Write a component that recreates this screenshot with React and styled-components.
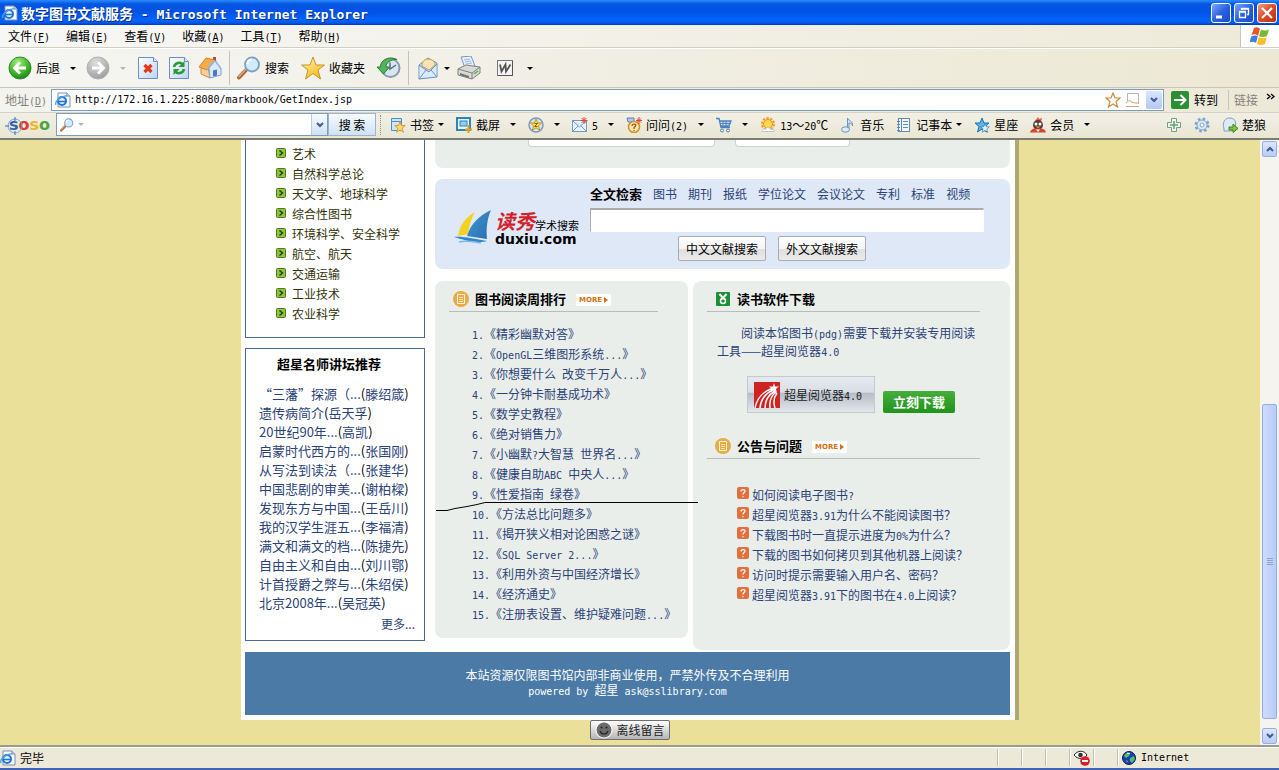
import React from "react";
import styled, { createGlobalStyle } from "styled-components";

const cjk = `"Noto Sans CJK SC", sans-serif`;

const GlobalStyle = createGlobalStyle`
  *, *::before, *::after {
    box-sizing: border-box;
  }
  body {
    margin: 0;
    font-family: ${cjk};
    font-size: 12px;
    line-height: 20px;
    color: #000;
    text-spacing-trim: space-all;
  }
  button, input {
    font: inherit;
    color: inherit;
  }
  button {
    padding: 0;
    border: 0;
    background: none;
    white-space: nowrap;
  }
  svg {
    display: block;
    flex: none;
  }
  ul, ol {
    margin: 0;
    padding: 0;
    list-style: none;
  }
`;

const Ascii = styled.span`
  font-family: "DejaVu Sans Mono", monospace;
  font-size: 10px;
  line-height: 1;
  white-space: pre-wrap;
`;

// latin runs are set in a half-width face, everything else stays full width
function Mixed({ children }) {
  return children
    .split(/([\x20-\x7e]+)/)
    .map((part, i) => (i % 2 ? <Ascii key={i}>{part}</Ascii> : part));
}

/* ---------- icons ---------- */

const IePage = ({ size = 16 }) => (
  <svg width={size} height={size} viewBox="0 0 16 16">
    <path d="M3 1h9l3 3v11H3z" fill="#f6faff" stroke="#7d8fae" />
    <path d="M12 1v3h3" fill="#cfdcf0" stroke="#7d8fae" />
    <circle cx="7" cy="9" r="4" fill="#eaf5ff" stroke="#1f76cf" strokeWidth="2" />
    <path d="M3.500 9.500h7" stroke="#1f76cf" strokeWidth="1.600" />
    <path d="M1 13C-1 9 8 3 12 4" fill="none" stroke="#4ba0e8" strokeWidth="1.300" />
  </svg>
);

const Back = () => (
  <svg width="24" height="24" viewBox="0 0 24 24">
    <defs>
      <radialGradient id="backFill" cx=".4" cy=".25" r=".8">
        <stop offset="0" stopColor="#a6ec7f" />
        <stop offset=".6" stopColor="#3fb52c" />
        <stop offset="1" stopColor="#1c7d15" />
      </radialGradient>
    </defs>
    <circle cx="12" cy="12" r="11" fill="url(#backFill)" stroke="#2c8a24" />
    <path d="M18 12H7M12 6.500L6.500 12l5.500 5.500" fill="none" stroke="#fff" strokeWidth="2.800" />
  </svg>
);

const Forward = () => (
  <svg width="24" height="24" viewBox="0 0 24 24">
    <defs>
      <radialGradient id="fwdFill" cx=".4" cy=".25" r=".8">
        <stop offset="0" stopColor="#dedede" />
        <stop offset="1" stopColor="#9b9b9b" />
      </radialGradient>
    </defs>
    <circle cx="12" cy="12" r="11" fill="url(#fwdFill)" stroke="#b2b2b2" />
    <path d="M6 12h11M12 6.500l5.500 5.500-5.500 5.500" fill="none" stroke="#fff" strokeWidth="2.800" />
  </svg>
);

const Sheet = ({ children }) => (
  <svg width="24" height="24" viewBox="0 0 24 24">
    <defs>
      <linearGradient id="sheetFill" x2="1" y2="1">
        <stop offset="0" stopColor="#fff" />
        <stop offset="1" stopColor="#bcd3f5" />
      </linearGradient>
    </defs>
    <path d="M2.500 1.500h15l4 4v17h-19z" fill="url(#sheetFill)" stroke="#6f8fc4" />
    <path d="M17.500 1.500v4h4" fill="#dfe9fa" stroke="#6f8fc4" />
    {children}
  </svg>
);

const Home = () => (
  <svg width="24" height="24" viewBox="0 0 24 24">
    <path d="M3 11l6-6 3 17-9-4z" fill="#f7cf9c" stroke="#c98b4a" />
    <path d="M11 12l6-7 6 7v7l-11 3z" fill="#dbe9fc" stroke="#7ea0d4" />
    <path d="M1 11L8 2l9 2-8 10z" fill="#f9ab4b" stroke="#d98226" />
    <path d="M9 13l8-9 6 9" fill="none" stroke="#9db7dd" strokeWidth="1.500" />
    <path d="M15 14.500l4-1v6l-4 1z" fill="#4d79b8" />
    <path d="M15 1h3v4l-3-2z" fill="#b94b28" />
  </svg>
);

const Magnifier = ({ size = 24 }) => (
  <svg width={size} height={size} viewBox="0 0 24 24">
    <path d="M9.500 13.500L2 21.500" stroke="#a9683a" strokeWidth="4" strokeLinecap="round" />
    <path d="M9 13l-7 7.500" stroke="#e4a877" strokeWidth="1.500" strokeLinecap="round" />
    <circle cx="15" cy="8.500" r="7" fill="#d3ecfd" stroke="#7c9fc9" strokeWidth="1.800" />
    <path d="M10.500 8c0-3 2-4.500 4.500-4.500" fill="none" stroke="#fff" strokeWidth="1.800" />
  </svg>
);

const StarTool = () => (
  <svg width="24" height="24" viewBox="0 0 24 24">
    <defs>
      <linearGradient id="starFill" x2=".6" y2="1">
        <stop offset="0" stopColor="#fffbb5" />
        <stop offset="1" stopColor="#f7b91d" />
      </linearGradient>
    </defs>
    <path
      d="M12 1l3 8h8.500L17 14l2.500 9L12 17.500 4.500 23 7 14 .5 9H9z"
      fill="url(#starFill)"
      stroke="#c8922c"
      strokeLinejoin="round"
    />
  </svg>
);

const History = () => (
  <svg width="24" height="24" viewBox="0 0 24 24">
    <circle cx="13.500" cy="12" r="9" fill="#d8e6f2" stroke="#8c9aa8" strokeWidth="2" />
    <path d="M13 6.500V13l6-4" fill="none" stroke="#5c6e80" strokeWidth="1.500" />
    <path d="M20 3.500C11-1 3 5 3.500 11H0l6.500 7 6-7H9C8.500 7 14 3 20 3.500z" fill="#54b45b" stroke="#2b7d35" />
  </svg>
);

const Mail = () => (
  <svg width="24" height="24" viewBox="0 0 24 24">
    <path d="M3 9l9-7 9 5v14L3 23z" fill="#bfdcf8" stroke="#6b94c8" />
    <path d="M6 10c0-5 3-7 6-7s7 2 7 6l-6 5z" fill="#fbe3b6" stroke="#d59c4b" />
    <path d="M3.500 10.500l9.500 6 7.500-7V20L3.500 22z" fill="#e4f2ff" opacity=".7" />
    <path d="M3 9l10 7 8-8M3 23l7-9M21 21l-6-7" fill="none" stroke="#6b94c8" />
  </svg>
);

const Printer = () => (
  <svg width="24" height="24" viewBox="0 0 24 24">
    <path d="M4 1l10-1 4 10-10 2z" fill="#e6f1ff" stroke="#7596c9" />
    <path d="M7 4l6-1M8 6l6-1M9 8l6-1" stroke="#9db9df" />
    <path d="M1 13l8-4 14 2v6l-8 6-14-4z" fill="#d9d9d6" stroke="#80807c" />
    <path d="M1 13l14 4 8-6M15 17v6" fill="none" stroke="#80807c" />
    <path d="M3 17l9 3v2l-9-3z" fill="#6d6d6a" />
    <path d="M17 18l4-3" stroke="#55b14b" strokeWidth="1.500" />
  </svg>
);

const WordIcon = () => (
  <svg width="24" height="24" viewBox="0 0 24 24">
    <rect x="4.500" y="4.500" width="15" height="15" fill="#f4f4f4" stroke="#777" />
    <path d="M5 19.500h14.500V5" fill="none" stroke="#555" />
    <path d="M7 8.500l1.500 7 4-7 .5 7 4.500-7" fill="none" stroke="#555" strokeWidth="1.800" />
  </svg>
);

const Flag = () => (
  <svg width="20" height="18" viewBox="0 0 20 18">
    <path d="M4 1c2-1 4-1 6 1L8 9C6 7 4 7 1.500 8z" fill="#e9562c" />
    <path d="M11 2.500c2 1 5 1.500 8 0L17 9c-3 1.500-6 1-8 .3z" fill="#78b833" />
    <path d="M1.300 9.500c3-1.500 5-1 6.500 0L6 16c-2-1.500-4-1.500-6.500-.5z" fill="#3d7fd9" />
    <path d="M8.700 10.300c2 1 5 1.500 8 0L15 17c-3 1.500-6 1-8-.3z" fill="#f7bf2a" />
  </svg>
);

const svg16 = { width: 16, height: 16, viewBox: "0 0 16 16" };
const starPath = "M8 1l2 5h5l-4 3.500 1.500 5.500L8 12l-4.500 3L5 9.500 1 6h5z";

const Bookmark = () => (
  <svg {...svg16}>
    <path d="M1.500 1.500h10v12h-10zM1 4.500h10" fill="#cfe6f8" stroke="#4d8fc4" />
    <path transform="translate(4 4) scale(.75)" d={starPath} fill="#ffd766" stroke="#cf8a1c" />
  </svg>
);
const Capture = () => (
  <svg {...svg16}>
    <rect x="1" y="1" width="13" height="12" fill="#e6f6fd" stroke="#2f84b5" strokeWidth="2" />
    <rect x="4" y="4" width="7" height="5" fill="#8fd1ee" stroke="#2f84b5" />
    <path d="M12.500 8v8M9 12.500h7" stroke="#e0a02b" strokeWidth="2" />
  </svg>
);
const CircleStar = () => (
  <svg {...svg16}>
    <circle cx="8" cy="8" r="7" fill="#d9e6f3" stroke="#7f9cbd" strokeWidth="1.500" />
    <path transform="translate(1.500 1) scale(.82)" d={starPath} fill="#ffdf52" stroke="#b98611" />
    <path d="M6.500 6.500h3l-3 3h3" fill="none" stroke="#8a6209" />
  </svg>
);
const NewMail = () => (
  <svg {...svg16}>
    <rect x=".5" y="3.500" width="14" height="11" fill="#e9f3fd" stroke="#6f9bc8" />
    <path d="M1 4l6.500 6L14 4M1 14l5-5M14 14L9 9" fill="none" stroke="#6f9bc8" />
    <path d="M12 0v7M8.500 3.500h7M9.500 1l5 5M14.500 1l-5 5" stroke="#d64a36" />
  </svg>
);
const Ask = () => (
  <svg {...svg16}>
    <path d="M1 1h7v4H2z" fill="#a9cbea" stroke="#5a86b4" />
    <circle cx="8" cy="10" r="5.500" fill="#ffe9b5" stroke="#d78f27" strokeWidth="1.500" />
    <path d="M6 9c0-3 5-2 3.500 0L8 10.500V12M8 13v1" fill="none" stroke="#9b5a12" strokeWidth="1.300" />
    <path d="M13 0v7M10 3.500h6M11 1.500l4 4M15 1.500l-4 4" stroke="#d64a36" />
  </svg>
);
const Cart = () => (
  <svg {...svg16}>
    <path d="M0 1.500h3l2 9h9M4 4h11l-2 5H5" fill="#b8d9f6" stroke="#4c83bd" strokeWidth="1.300" />
    <path d="M4.500 6.500h10M7 4v5M10 4v5" stroke="#4c83bd" />
    <circle cx="6" cy="13.500" r="1.500" fill="#fff" stroke="#4c83bd" />
    <circle cx="12" cy="13.500" r="1.500" fill="#fff" stroke="#4c83bd" />
  </svg>
);
const Sun = () => (
  <svg {...svg16}>
    <circle cx="8" cy="7" r="6" fill="none" stroke="#f0a321" strokeWidth="2" strokeDasharray="2.500 1.200" />
    <circle cx="8" cy="7" r="4.500" fill="#ffd84d" stroke="#ea8f1c" />
    <path d="M2 14.500c0-3 3-3 3.500-2 1-3 5-2 5 0 2-1 4 0 3.500 2z" fill="#fff" stroke="#b9c6d4" />
  </svg>
);
const Music = () => (
  <svg {...svg16}>
    <path d="M7.500 12V1c1 3 6 3 5 8 0-2-2-3-3.500-3v7" fill="#cfe4f8" stroke="#6d93bf" />
    <ellipse cx="5.500" cy="12.500" rx="4" ry="2.700" fill="#d8eafb" stroke="#6d93bf" />
  </svg>
);
const Notebook = () => (
  <svg {...svg16}>
    <rect x="2.500" y="1.500" width="11" height="13" fill="#eef6fe" stroke="#6287b8" />
    <path d="M5.500 1v14M7 4.500h5M7 7.500h5M7 10.500h5" stroke="#6287b8" />
    <path d="M1 4.500h3M1 7.500h3M1 10.500h3M1 13.500h3" stroke="#6287b8" />
  </svg>
);
const BlueStar = () => (
  <svg {...svg16}>
    <path d={starPath} fill="#57b5ef" stroke="#1f70b5" />
    <path transform="translate(6 6) scale(.62)" d={starPath} fill="#e5f6ff" stroke="#1f70b5" />
  </svg>
);
const Penguin = () => (
  <svg {...svg16}>
    <path d="M5 4l3-4 1 2 3-1-1 4z" fill="#e8593b" />
    <ellipse cx="8" cy="8" rx="5" ry="5" fill="#5a3a3a" />
    <circle cx="6" cy="7" r="1.500" fill="#fff" />
    <circle cx="10" cy="7" r="1.500" fill="#fff" />
    <path d="M5.500 9.500h5L8 11z" fill="#f5b32c" />
    <path d="M0 15.500c1-4 4-4 8-4s7 0 8 4z" fill="#d8452f" />
    <path d="M6 12.500h4L8 15z" fill="#fff" />
  </svg>
);
const Plus = () => (
  <svg {...svg16}>
    <path d="M5.500 1.500h5v4h4v5h-4v4h-5v-4h-4v-5h4z" fill="#eef5ee" stroke="#7b9a8a" />
    <path d="M8 4v8M4 8h8" stroke="#5da36b" strokeWidth="1.500" />
  </svg>
);
const Gear = () => (
  <svg {...svg16}>
    <circle cx="8" cy="8" r="6" fill="none" stroke="#7fa3cb" strokeWidth="3" strokeDasharray="2.400 2.312" />
    <circle cx="8" cy="8" r="5" fill="#deebf8" stroke="#7fa3cb" />
    <circle cx="8" cy="8" r="2" fill="#f6faff" stroke="#7fa3cb" />
  </svg>
);
const User = () => (
  <svg {...svg16}>
    <path d="M2 12C0 5 3 1 7.500 1S15 4 13 10l-3 4H2z" fill="#dce9f6" stroke="#7f9fc4" />
    <path d="M7 10h4V7l5 4.500-5 4V13H7z" fill="#7fc343" stroke="#3f8420" />
  </svg>
);

const Bullet = () => (
  <svg width="10" height="10" viewBox="0 0 10 10">
    <rect x=".5" y=".5" width="9" height="9" rx="1" fill="#8fc33f" stroke="#4d7c1b" />
    <path d="M3.500 2.500L6.500 5l-3 2.500" fill="none" stroke="#1f3d08" strokeWidth="1.400" />
  </svg>
);
const Question = () => (
  <svg width="12" height="12" viewBox="0 0 12 12">
    <rect width="12" height="12" rx="2" fill="#e2703c" />
    <path d="M4 4.500C4 1.800 8.300 2 8 4.500 7.800 5.800 6 5.500 6 7.500M6 9v1.200" fill="none" stroke="#fff" strokeWidth="1.200" />
  </svg>
);
const NoteDisc = () => (
  <svg {...svg16}>
    <circle cx="8" cy="8" r="8" fill="#e8ab45" />
    <path d="M4.500 3.500h7v9h-7z" fill="none" stroke="#fff6dd" />
    <path d="M6 6.500h4M6 8.500h4M6 10.500h4" stroke="#fff6dd" strokeWidth=".8" />
  </svg>
);
const GreenMark = () => (
  <svg {...svg16}>
    <rect x="1" y="1" width="14" height="14" rx="1" fill="#1c8f3a" />
    <path d="M4.500 3l3.500 4 3.500-4" fill="none" stroke="#fff" strokeWidth="2" />
    <circle cx="8" cy="10" r="2.500" fill="none" stroke="#fff" strokeWidth="1.500" />
  </svg>
);
const Sails = () => (
  <svg width="40" height="36" viewBox="0 0 40 36">
    <defs>
      <linearGradient id="sailBlue" x2="1" y2="1">
        <stop offset="0" stopColor="#3f9ad2" />
        <stop offset="1" stopColor="#2a6cae" />
      </linearGradient>
    </defs>
    <path d="M22 3C13 8 7 15 5 27l10-2c1-8 3-15 7-22z" fill="#f4d21f" />
    <path d="M38 1C26 7 18 14 14 27l20 3c-1-10 0-20 4-29z" fill="url(#sailBlue)" />
    <path d="M1 28c8-1 20 2 33 4-8 3-24-1-33-4z" fill="#2f86c6" />
    <path d="M6 33c8-2 15 0 22 1" fill="none" stroke="#7db8e0" strokeWidth="1.500" />
  </svg>
);
const ReaderLogo = () => (
  <svg width="26" height="26" viewBox="0 0 26 26">
    <rect width="26" height="26" fill="#cf2323" />
    <path d="M1 26C3 16 8 10 19 6M6 26C7 17 11 12 20 7M11 26c0-8 3-13 10-17M16 26c-1-7 1-12 6-16M21 26c-2-6-1-11 2-15" fill="none" stroke="#fff" strokeWidth="1.500" />
    <path d="M20 1l1 3.500h4L22 7l1 4-3-2.500-3.500 2L18 7l-3-2.500h4z" fill="#fff" />
  </svg>
);
const Smiley = () => (
  <svg width="18" height="18" viewBox="0 0 18 18">
    <circle cx="9" cy="9" r="8.500" fill="#fff" />
    <circle cx="9" cy="9" r="7.500" fill="#6c6c6c" />
    <circle cx="6.500" cy="6.500" r="1" fill="#222" />
    <circle cx="11.500" cy="6.500" r="1" fill="#222" />
    <path d="M5 10c1.500 4 6.500 4 8 0" fill="none" stroke="#222" strokeWidth="1.200" />
  </svg>
);
const BlockedEye = () => (
  <svg {...svg16}>
    <path d="M0 5c4-5 10-5 13 0-3 4-9 5-13 0z" fill="#fff" stroke="#222" />
    <circle cx="6.500" cy="5" r="2.300" fill="#333" />
    <circle cx="11" cy="11" r="4.800" fill="#d8202a" />
    <path d="M8 11h6" stroke="#fff" strokeWidth="2" />
  </svg>
);
const Globe = () => (
  <svg width="14" height="14" viewBox="0 0 14 14">
    <circle cx="7" cy="7" r="6.500" fill="#1b3fb0" stroke="#0a1c55" />
    <path d="M2 5c1-3 4-4 6-3.500L7 5 4 7zM8 7l4-2 1 3-3 4-2-2zM4 9l2 1-1 2z" fill="#4fc06a" />
    <path d="M5 2l3 1" stroke="#dff" />
  </svg>
);

/* ---------- browser window ---------- */

const Window = styled.div`
  display: flex;
  flex-direction: column;
  height: 100vh;
  overflow: hidden;
  background-color: #efede0;
`;

const TitleBar = styled.header`
  flex: none;
  display: flex;
  align-items: center;
  gap: 3px;
  height: 25px;
  padding: 0 2px;
  background: linear-gradient(#2a8bff 0, #0456e0 4px, #0252e6 12px, #0364fc 20px, #0358e8 23px, #0038b0 25px);
`;

const WindowTitle = styled.h1`
  flex: 1;
  margin: 0;
  font-size: 14px;
  line-height: 22px;
  color: #fff;
  text-shadow: 1px 1px #0a2f86;
  white-space: nowrap;
  ${Ascii} {
    font-size: 13px;
  }
`;

const WindowButton = styled.button`
  display: flex;
  align-items: center;
  justify-content: center;
  width: 20px;
  height: 20px;
  border: 1px solid #fff;
  border-radius: 3px;
  background: ${(p) =>
    p.$close
      ? "linear-gradient(135deg, #f0a088, #dd4a25 50%, #b8310f)"
      : "linear-gradient(135deg, #7ea8f8, #2b62e0 50%, #1b4bc4)"};
`;

const MenuBar = styled.nav`
  flex: none;
  display: flex;
  align-items: center;
  gap: 16px;
  height: 23px;
  padding-left: 8px;
  background: linear-gradient(90deg, #f7f7f5, #edead9);
  border-bottom: 1px solid #d2cfc0;
`;

const FlagBox = styled.div`
  display: flex;
  align-items: center;
  align-self: stretch;
  justify-content: center;
  width: 39px;
  margin-left: auto;
  border-left: 1px solid #c8c5b4;
  background-color: #fff;
`;

const Toolbar = styled.div`
  flex: none;
  display: flex;
  align-items: center;
  gap: 7px;
  height: 40px;
  padding-left: 8px;
  background: linear-gradient(90deg, #f5f5f2, #ece8d4);
  border-top: 1px solid #fff;
  border-bottom: 1px solid #c9c6b5;
`;

const Tool = styled.button`
  display: flex;
  align-items: center;
  gap: 4px;
  padding-right: ${(p) => (p.$trail ? "5px" : "0")};
`;

const Caret = styled.span`
  width: 0;
  border: 3px solid transparent;
  border-top-color: ${(p) => (p.$off ? "#b9b7ac" : "#000")};
  border-bottom: 0;
`;

const CaretButton = styled.button`
  display: flex;
  justify-content: center;
  width: 12px;
`;

const Divider = styled.span`
  width: 1px;
  align-self: stretch;
  margin: 2px 0;
  background-color: #c5c2b2;
`;

const AddressBar = styled.form`
  flex: none;
  display: flex;
  align-items: center;
  height: 24px;
  padding-left: 5px;
  background: linear-gradient(90deg, #f3f3ef, #ece9d8);
`;

const Muted = styled.label`
  color: #848278;
  white-space: nowrap;
`;

const Field = styled.div`
  display: flex;
  align-items: center;
  gap: 4px;
  height: ${(p) => p.$height};
  padding-left: 3px;
  border: 1px solid #7f9db9;
  background-color: #fff;
`;

const AddressField = styled(Field)`
  flex: 1;
  margin-left: 4px;
`;

const BareInput = styled.input`
  flex: 1;
  min-width: 0;
  height: 18px;
  padding: 0;
  border: 0;
  outline: 0;
  background: none;
  font-family: "DejaVu Sans Mono", monospace;
  font-size: 10px;
`;

const DropButton = styled.button`
  display: flex;
  align-items: center;
  justify-content: center;
  width: 16px;
  align-self: stretch;
  margin: 1px;
  border-radius: 2px;
  background: linear-gradient(#dbe6fd, #b4c8f6);
`;

const SosoDrop = styled(DropButton)`
  margin: 0;
  border-left: 1px solid #b7cbe2;
  border-radius: 0;
  background: linear-gradient(#f6fbff, #cfe1f3);
`;

const GoButton = styled.button`
  display: flex;
  align-items: center;
  gap: 5px;
  padding: 0 10px 0 7px;
`;

const LinksTab = styled.div`
  display: flex;
  gap: 8px;
  width: 51px;
  padding-left: 5px;
  border-left: 1px solid #c9c6b5;
  svg {
    margin-top: 3px;
  }
`;

const SosoBar = styled.div`
  flex: none;
  display: flex;
  align-items: center;
  height: 28px;
  padding: 0 13px 2px 5px;
  background: linear-gradient(#f2f0e6, #e9e6d4);
  border-top: 1px solid #d6d3c3;
  border-bottom: 2px solid #7d7c70;
`;

const SosoLogo = styled.div`
  position: relative;
  width: 51px;
  padding-left: 4px;
  font-family: "DejaVu Sans", sans-serif;
  font-size: 16px;
  font-weight: bold;
  line-height: 20px;
  svg {
    position: absolute;
    left: 0;
    top: 2px;
  }
`;

const Letter = styled.span`
  color: ${(p) => p.$color};
`;

const SosoField = styled(Field)`
  width: 272px;
`;

const SosoButton = styled.button`
  width: 48px;
  height: 23px;
  border: 1px solid #9bb4cf;
  background: linear-gradient(#f6fbff, #cfe1f3);
`;

const SosoItems = styled.div`
  display: flex;
  align-items: center;
  gap: 12px;
  margin-left: 4px;
  padding-left: 9px;
  border-left: 1px dotted #8f8d80;
`;

const SosoItem = styled.button`
  display: flex;
  align-items: center;
  gap: 4px;
  ${Caret} {
    margin-left: ${(p) => (p.$tight ? "0" : "6px")};
  }
`;

const SosoEnd = styled(SosoItems)`
  margin-left: auto;
  border-left: 0;
`;

const Viewport = styled.div`
  flex: 1;
  display: flex;
  min-height: 0;
`;

const Canvas = styled.main`
  flex: 1;
  overflow: hidden;
  background-color: #eae09a;
`;

const Scrollbar = styled.div`
  flex: none;
  display: flex;
  flex-direction: column;
  width: 19px;
  padding: 1px 2px;
  background-color: #f5f4ee;
`;

const ScrollButton = styled.button`
  display: flex;
  align-items: center;
  justify-content: center;
  height: 16px;
  border: 1px solid #98aee0;
  border-radius: 2px;
  background: linear-gradient(#dde7fe, #b9cbf8);
`;

const Track = styled.div`
  flex: 1;
  display: flex;
  flex-direction: column;
  justify-content: flex-end;
  padding-bottom: 9px;
`;

const Thumb = styled.div`
  display: flex;
  align-items: center;
  justify-content: center;
  height: 56%;
  border: 1px solid #98aee0;
  border-radius: 2px;
  background: linear-gradient(90deg, #cddbfd, #b9cbf8);
`;

const StatusBar = styled.footer`
  flex: none;
  display: flex;
  align-items: center;
  height: 25px;
  border-top: 2px solid #9b9a8b;
  border-bottom: 2px solid #3f63b8;
  background-color: #ece9d8;
  box-shadow: inset 0 1px #fff;
`;

const StatusText = styled.div`
  flex: 1;
  display: flex;
  align-items: center;
  gap: 4px;
`;

const StatusCell = styled.div`
  display: flex;
  align-items: center;
  gap: 5px;
  width: ${(p) => (p.$wide ? "162px" : "24px")};
  height: 17px;
  padding-left: 4px;
  border-left: 1px solid #c2bfae;
  box-shadow: inset 1px 0 #fff;
`;

/* ---------- library page ---------- */

const Page = styled.div`
  max-width: 778px;
  margin: 0 auto;
  padding: 0 5px 5px 4px;
  border-right: 4px solid #b0a874;
  background-color: #fff;
`;

const Columns = styled.div`
  display: flex;
  gap: 10px;
`;

const Side = styled.aside`
  flex: 0 0 180px;
  display: flex;
  flex-direction: column;
  gap: 10px;
`;

const CategoryBox = styled.ul`
  padding: 4px 0 13px 30px;
  border: solid #4a6a90;
  border-width: 0 1px 1px;
`;

const CategoryItem = styled.li`
  display: flex;
  gap: 6px;
  svg {
    margin-top: 4px;
  }
`;

const Link = styled.a`
  color: ${(p) => p.$color || "#2b4277"};
  text-decoration: none;
`;

const LectureBox = styled.section`
  padding: 4px 9px 4px 13px;
  border: 1px solid #4a6a90;
`;

const LectureTitle = styled.h2`
  margin: 0 0 9px 18px;
  font-size: 13px;
  line-height: 22px;
`;

const Lecture = styled.li`
  font-size: 13px;
  line-height: 19px;
  white-space: nowrap;
`;

const More = styled.div`
  line-height: 24px;
  text-align: right;
`;

const Main = styled.div`
  flex: 1;
  min-width: 0;
`;

const TopPanel = styled.div`
  display: flex;
  gap: 20px;
  height: 28px;
  margin-bottom: 11px;
  padding-left: 93px;
  border-radius: 0 0 8px 8px;
  background-color: #eaeeeb;
`;

const CutBox = styled.div`
  width: ${(p) => p.$width};
  height: 7px;
  border: solid #cfd3d0;
  border-width: 0 1px 1px;
  border-radius: 0 0 4px 4px;
  background-color: #fff;
`;

const Duxiu = styled.form`
  display: flex;
  gap: 9px;
  height: 90px;
  margin-bottom: 12px;
  padding: 5px 26px 0 18px;
  border-radius: 8px;
  background-color: #dfe8f7;
`;

const DuxiuLogo = styled.div`
  flex: none;
  display: flex;
  align-items: center;
  gap: 2px;
  width: 128px;
`;

const Brand = styled.div`
  width: 86px;
  white-space: nowrap;
`;

const BrandTop = styled.div`
  display: flex;
  align-items: flex-end;
  height: 24px;
`;

const BrandName = styled.span`
  font-size: 20px;
  font-style: italic;
  font-weight: bold;
  line-height: 24px;
  color: #d1222b;
`;

const BrandSub = styled.span`
  font-size: 11px;
  line-height: 16px;
`;

const BrandHost = styled.div`
  font-family: "DejaVu Sans", sans-serif;
  font-size: 14px;
  font-weight: bold;
  line-height: 12px;
`;

const DuxiuSearch = styled.div`
  flex: 1;
`;

const Tabs = styled.div`
  display: flex;
  gap: 11px;
  line-height: 20px;
  white-space: nowrap;
  strong {
    font-size: 13px;
  }
`;

const QueryInput = styled.input`
  display: block;
  width: 100%;
  height: 24px;
  margin: 4px 0;
  border: 1px solid #fff;
  border-top: 2px solid #a9abae;
  border-left-color: #a9abae;
`;

const Buttons = styled.div`
  display: flex;
  justify-content: center;
  gap: 12px;
  padding-right: 30px;
`;

const SearchButton = styled.button`
  width: 88px;
  height: 25px;
  border: 1px solid #a9abad;
  border-radius: 2px;
  background: linear-gradient(#fff 0, #f5f5f5 50%, #dedede 55%, #ececec);
`;

const Panels = styled.div`
  position: relative;
  display: grid;
  grid-template-columns: 253fr 317fr;
  gap: 5px;
  align-items: start;
`;

const Panel = styled.section`
  padding-bottom: ${(p) => p.$bottom};
  border-radius: 8px;
  background-color: #eaeeeb;
`;

const Head = styled.div`
  display: flex;
  align-items: center;
  gap: 6px;
  height: 31px;
  margin: ${(p) => (p.$second ? "15px" : "0")} 30px 0 14px;
  padding: 5px 0 0 ${(p) => (p.$inset ? "8px" : "4px")};
  border-bottom: 1px solid #b9bdba;
  h2 {
    margin: 0;
    padding-right: 4px;
    font-size: 13px;
    line-height: 20px;
  }
`;

const MoreBadge = styled.a`
  display: flex;
  align-items: center;
  gap: 2px;
  height: 12px;
  margin-top: 3px;
  padding: 0 3px;
  background-color: #fff;
  font-family: "DejaVu Sans", sans-serif;
  font-size: 7px;
  font-weight: bold;
  color: #d0700f;
  text-decoration: none;
`;

const RankList = styled.ol`
  margin: 12px 0 0;
  padding-left: 37px;
  color: #2b4277;
  white-space: nowrap;
`;

const Intro = styled.p`
  margin: 12px 34px 16px 24px;
  line-height: 18px;
  text-indent: 24px;
  color: #2b4277;
`;

const Downloads = styled.div`
  display: flex;
  align-items: flex-end;
  gap: 8px;
  padding-left: 54px;
`;

const ReaderLink = styled.a`
  display: flex;
  align-items: center;
  gap: 4px;
  width: 128px;
  height: 37px;
  padding-left: 6px;
  border: 1px solid #c3c9cf;
  background: linear-gradient(#e6eaee 0, #d8dee4 44%, #b4bcc6 45%, #e2e7ec);
  color: #222;
  text-decoration: none;
`;

const DownloadButton = styled.button`
  width: 72px;
  height: 22px;
  border-radius: 2px;
  background: linear-gradient(#46ad3c, #1f941b);
  font-size: 13px;
  font-weight: bold;
  color: #fff;
`;

const FaqList = styled.ul`
  margin-top: 26px;
  padding-left: 44px;
`;

const FaqItem = styled.li`
  display: flex;
  gap: 3px;
  white-space: nowrap;
  svg {
    margin-top: 2px;
  }
`;

const Stroke = styled.svg`
  position: absolute;
  left: 0;
  top: 220px;
  pointer-events: none;
`;

const PageFooter = styled.div`
  height: 63px;
  margin-top: 2px;
  padding-top: 15px;
  background-color: #4b7aa6;
  color: #fff;
  line-height: 15px;
  text-align: center;
`;

const ChatButton = styled.button`
  display: flex;
  align-items: center;
  justify-content: center;
  gap: 3px;
  width: 80px;
  height: 20px;
  margin: 0 auto;
  border: 1px solid #6e6e6e;
  border-radius: 2px;
  background: linear-gradient(#fff, #b5b5b5);
  color: #222;
`;

const menus = [["文件", "F"], ["编辑", "E"], ["查看", "V"], ["收藏", "A"], ["工具", "T"], ["帮助", "H"]];

const sosoItems = [
  { icon: Bookmark, text: "书签", caret: true, tight: true },
  { icon: Capture, text: "截屏", caret: true },
  { icon: CircleStar, text: "", label: "收藏", caret: true },
  { icon: NewMail, text: "5", caret: true },
  { icon: Ask, text: "问问(2)", caret: true },
  { icon: Cart, text: "", label: "购物", caret: true },
  { icon: Sun, text: "13～20℃" },
  { icon: Music, text: "音乐" },
  { icon: Notebook, text: "记事本", caret: true, tight: true },
  { icon: BlueStar, text: "星座" },
  { icon: Penguin, text: "会员", caret: true },
];

const categories = [
  "艺术",
  "自然科学总论",
  "天文学、地球科学",
  "综合性图书",
  "环境科学、安全科学",
  "航空、航天",
  "交通运输",
  "工业技术",
  "农业科学",
];

const lectures = [
  ["“三藩”探源（...", "滕绍箴"],
  ["遗传病简介", "岳天孚"],
  ["20世纪90年...", "高凯"],
  ["启蒙时代西方的...", "张国刚"],
  ["从写法到读法（...", "张建华"],
  ["中国悲剧的审美...", "谢柏樑"],
  ["发现东方与中国...", "王岳川"],
  ["我的汉学生涯五...", "李福清"],
  ["满文和满文的档...", "陈捷先"],
  ["自由主义和自由...", "刘川鄂"],
  ["计首授爵之弊与...", "朱绍侯"],
  ["北京2008年...", "吴冠英"],
];

const searchTabs = ["图书", "期刊", "报纸", "学位论文", "会议论文", "专利", "标准", "视频"];

const ranking = [
  "精彩幽默对答",
  "OpenGL三维图形系统...",
  "你想要什么 改变千万人...",
  "一分钟卡耐基成功术",
  "数学史教程",
  "绝对销售力",
  "小幽默?大智慧 世界名...",
  "健康自助ABC 中央人...",
  "性爱指南 绿卷",
  "方法总比问题多",
  "揭开狭义相对论困惑之谜",
  "SQL Server 2...",
  "利用外资与中国经济增长",
  "经济通史",
  "注册表设置、维护疑难问题...",
];

const faqs = [
  "如何阅读电子图书?",
  "超星阅览器3.91为什么不能阅读图书？",
  "下载图书时一直提示进度为0%为什么？",
  "下载的图书如何拷贝到其他机器上阅读？",
  "访问时提示需要输入用户名、密码？",
  "超星阅览器3.91下的图书在4.0上阅读？",
];

const Chevron = ({ up }) => (
  <svg width="8" height="6" viewBox="0 0 8 6">
    <path d={up ? "M1 5l3-3 3 3" : "M1 1l3 3 3-3"} fill="none" stroke="#3f5a94" strokeWidth="2" />
  </svg>
);

const MoreLink = () => (
  <MoreBadge href="#">
    MORE
    <svg width="4" height="6" viewBox="0 0 4 6">
      <path d="M0 0l4 3-4 3z" fill="#d0700f" />
    </svg>
  </MoreBadge>
);

function BrowserChrome() {
  return (
    <>
      <TitleBar>
        <IePage />
        <WindowTitle>
          <Mixed>数字图书文献服务 - Microsoft Internet Explorer</Mixed>
        </WindowTitle>
        <WindowButton aria-label="最小化">
          <svg width="14" height="14" viewBox="0 0 14 14">
            <path d="M2 11h6" stroke="#fff" strokeWidth="3" />
          </svg>
        </WindowButton>
        <WindowButton aria-label="还原">
          <svg width="14" height="14" viewBox="0 0 14 14">
            <path d="M4.500 4V2.500h7v6H10M4 3h8M2.500 5.500h6v6h-6zM2 6h7" fill="none" stroke="#fff" strokeWidth="1.300" />
          </svg>
        </WindowButton>
        <WindowButton $close aria-label="关闭">
          <svg width="14" height="14" viewBox="0 0 14 14">
            <path d="M2 2l10 10M12 2L2 12" stroke="#fff" strokeWidth="2.200" />
          </svg>
        </WindowButton>
      </TitleBar>
      <MenuBar>
        {menus.map(([name, key]) => (
          <button key={key}>
            {name}
            <Ascii>
              (<u>{key}</u>)
            </Ascii>
          </button>
        ))}
        <FlagBox>
          <Flag />
        </FlagBox>
      </MenuBar>
      <Toolbar>
        <Tool>
          <Back />
          后退
        </Tool>
        <CaretButton aria-label="后退记录">
          <Caret />
        </CaretButton>
        <Tool aria-label="前进">
          <Forward />
        </Tool>
        <CaretButton aria-label="前进记录">
          <Caret $off />
        </CaretButton>
        <Tool aria-label="停止">
          <Sheet>
            <path d="M8.500 9l7 7M15.500 9l-7 7" stroke="#e23a17" strokeWidth="3.200" />
          </Sheet>
        </Tool>
        <Tool aria-label="刷新">
          <Sheet>
            <path d="M7 11c1-5 7-5 8.500-2.500M17 13c-1 5-7 5-8.500 2.500" fill="none" stroke="#2a9a33" strokeWidth="2.500" />
            <path d="M17.500 5v6h-6zM6.500 19v-6h6z" fill="#2a9a33" />
          </Sheet>
        </Tool>
        <Tool aria-label="主页">
          <Home />
        </Tool>
        <Divider />
        <Tool $trail>
          <Magnifier />
          搜索
        </Tool>
        <Tool $trail>
          <StarTool />
          收藏夹
        </Tool>
        <Tool aria-label="历史">
          <History />
        </Tool>
        <Divider />
        <Tool aria-label="邮件">
          <Mail />
          <Caret />
        </Tool>
        <Tool $trail aria-label="打印">
          <Printer />
        </Tool>
        <Tool aria-label="编辑">
          <WordIcon />
        </Tool>
        <CaretButton aria-label="编辑选项">
          <Caret />
        </CaretButton>
      </Toolbar>
      <AddressBar>
        <Muted htmlFor="address">
          地址
          <Ascii>
            (<u>D</u>)
          </Ascii>
        </Muted>
        <AddressField $height="22px">
          <IePage />
          <BareInput id="address" defaultValue="http://172.16.1.225:8080/markbook/GetIndex.jsp" />
          <svg width="16" height="16" viewBox="0 0 16 16">
            <path d={starPath} fill="#fff" stroke="#c98a3c" strokeWidth="1.200" />
          </svg>
          <svg width="16" height="16" viewBox="0 0 16 16">
            <path d="M2.500 9V1.500h11V12" fill="none" stroke="#b8b3c2" />
            <path d="M1 11c3-3 5-3 5-1l4 1h4M1 14.500h13" fill="none" stroke="#d3a083" />
          </svg>
          <DropButton type="button" aria-label="展开地址">
            <Chevron />
          </DropButton>
        </AddressField>
        <GoButton type="button">
          <svg width="18" height="18" viewBox="0 0 18 18">
            <rect width="18" height="18" rx="2" fill="#2b8f34" />
            <path d="M3 9h11M9.500 4l5 5-5 5" fill="none" stroke="#fff" strokeWidth="2" />
          </svg>
          转到
        </GoButton>
        <LinksTab>
          <Muted as="span">链接</Muted>
          <svg width="9" height="8" viewBox="0 0 9 8">
            <path d="M1 1l3 2.500L1 6M5 1l3 2.500L5 6" fill="none" stroke="#000" strokeWidth="1.300" />
          </svg>
        </LinksTab>
      </AddressBar>
      <SosoBar>
        <SosoLogo>
          <svg width="18" height="18" viewBox="0 0 18 18">
            <circle cx="10" cy="9" r="7" fill="none" stroke="#7ba5d8" />
            <path d="M0 9h4M10 0v4M10 14v4" stroke="#3a6cb5" />
          </svg>
          <Letter $color="#2f63b5">s</Letter>
          <Letter $color="#dc3b34">o</Letter>
          <Letter $color="#f0b429">s</Letter>
          <Letter $color="#4da637">o</Letter>
        </SosoLogo>
        <SosoField $height="23px">
          <Magnifier size={14} />
          <Caret $off />
          <BareInput aria-label="搜索内容" />
          <SosoDrop aria-label="展开搜索">
            <Chevron />
          </SosoDrop>
        </SosoField>
        <SosoButton>搜 索</SosoButton>
        <SosoItems>
          {sosoItems.map(({ icon: Icon, text, label, caret, tight }, i) => (
            <SosoItem key={i} $tight={tight} aria-label={label}>
              <Icon />
              {text && (
                <span>
                  <Mixed>{text}</Mixed>
                </span>
              )}
              {caret && <Caret />}
            </SosoItem>
          ))}
        </SosoItems>
        <SosoEnd>
          <SosoItem aria-label="添加">
            <Plus />
          </SosoItem>
          <SosoItem aria-label="设置">
            <Gear />
          </SosoItem>
          <SosoItem>
            <User />
            楚狼
          </SosoItem>
        </SosoEnd>
      </SosoBar>
    </>
  );
}

function LibraryPage() {
  return (
    <Page>
      <Columns>
        <Side>
          <CategoryBox>
            {categories.map((name) => (
              <CategoryItem key={name}>
                <Bullet />
                <Link href="#" $color="#33330a">
                  {name}
                </Link>
              </CategoryItem>
            ))}
          </CategoryBox>
          <LectureBox>
            <LectureTitle>超星名师讲坛推荐</LectureTitle>
            <ul>
              {lectures.map(([title, speaker]) => (
                <Lecture key={title}>
                  <Link href="#">{title}</Link>(<Link href="#">{speaker}</Link>)
                </Lecture>
              ))}
            </ul>
            <More>
              <Link href="#">更多...</Link>
            </More>
          </LectureBox>
        </Side>
        <Main>
          <TopPanel>
            <CutBox $width="187px" />
            <CutBox $width="115px" />
          </TopPanel>
          <Duxiu>
            <DuxiuLogo>
              <Sails />
              <Brand>
                <BrandTop>
                  <BrandName>读秀</BrandName>
                  <BrandSub>学术搜索</BrandSub>
                </BrandTop>
                <BrandHost>duxiu.com</BrandHost>
              </Brand>
            </DuxiuLogo>
            <DuxiuSearch>
              <Tabs>
                <strong>全文检索</strong>
                {searchTabs.map((tab) => (
                  <Link key={tab} href="#">
                    {tab}
                  </Link>
                ))}
              </Tabs>
              <QueryInput aria-label="全文检索" />
              <Buttons>
                <SearchButton type="button">中文文献搜索</SearchButton>
                <SearchButton type="button">外文文献搜索</SearchButton>
              </Buttons>
            </DuxiuSearch>
          </Duxiu>
          <Panels>
            <Panel $bottom="14px">
              <Head>
                <NoteDisc />
                <h2>图书阅读周排行</h2>
                <MoreLink />
              </Head>
              <RankList>
                {ranking.map((title, i) => (
                  <li key={title}>
                    <Ascii>{i + 1}.</Ascii>
                    <Link href="#">
                      <Mixed>{`《${title}》`}</Mixed>
                    </Link>
                  </li>
                ))}
              </RankList>
            </Panel>
            <Panel $bottom="45px">
              <Head $inset>
                <GreenMark />
                <h2>读书软件下载</h2>
              </Head>
              <Intro>
                <Mixed>阅读本馆图书(pdg)需要下载并安装专用阅读工具——超星阅览器4.0</Mixed>
              </Intro>
              <Downloads>
                <ReaderLink href="#">
                  <ReaderLogo />
                  <span>
                    <Mixed>超星阅览器4.0</Mixed>
                  </span>
                </ReaderLink>
                <DownloadButton>立刻下载</DownloadButton>
              </Downloads>
              <Head $inset $second>
                <NoteDisc />
                <h2>公告与问题</h2>
                <MoreLink />
              </Head>
              <FaqList>
                {faqs.map((faq) => (
                  <FaqItem key={faq}>
                    <Question />
                    <Link href="#">
                      <Mixed>{faq}</Mixed>
                    </Link>
                  </FaqItem>
                ))}
              </FaqList>
            </Panel>
            <Stroke width="264" height="10" viewBox="0 0 264 10">
              <path d="M1 9.500h11l8-2 12-2 10-2 8-2h213" fill="none" stroke="#000" />
            </Stroke>
          </Panels>
        </Main>
      </Columns>
      <PageFooter>
        本站资源仅限图书馆内部非商业使用，严禁外传及不合理利用
        <br />
        <Mixed>powered by 超星 ask@sslibrary.com</Mixed>
      </PageFooter>
    </Page>
  );
}

export default function App() {
  return (
    <Window>
      <GlobalStyle />
      <BrowserChrome />
      <Viewport>
        <Canvas>
          <LibraryPage />
          <ChatButton>
            <Smiley />
            离线留言
          </ChatButton>
        </Canvas>
        <Scrollbar>
          <ScrollButton aria-label="向上滚动">
            <Chevron up />
          </ScrollButton>
          <Track>
            <Thumb>
              <svg width="6" height="8" viewBox="0 0 6 8">
                <path d="M0 .5h6M0 2.500h6M0 4.500h6M0 6.500h6" stroke="#8ba4dc" />
              </svg>
            </Thumb>
          </Track>
          <ScrollButton aria-label="向下滚动">
            <Chevron />
          </ScrollButton>
        </Scrollbar>
      </Viewport>
      <StatusBar>
        <StatusText>
          <IePage />
          完毕
        </StatusText>
        <StatusCell />
        <StatusCell />
        <StatusCell />
        <StatusCell>
          <BlockedEye />
        </StatusCell>
        <StatusCell />
        <StatusCell $wide>
          <Globe />
          <Ascii>Internet</Ascii>
        </StatusCell>
      </StatusBar>
    </Window>
  );
}
